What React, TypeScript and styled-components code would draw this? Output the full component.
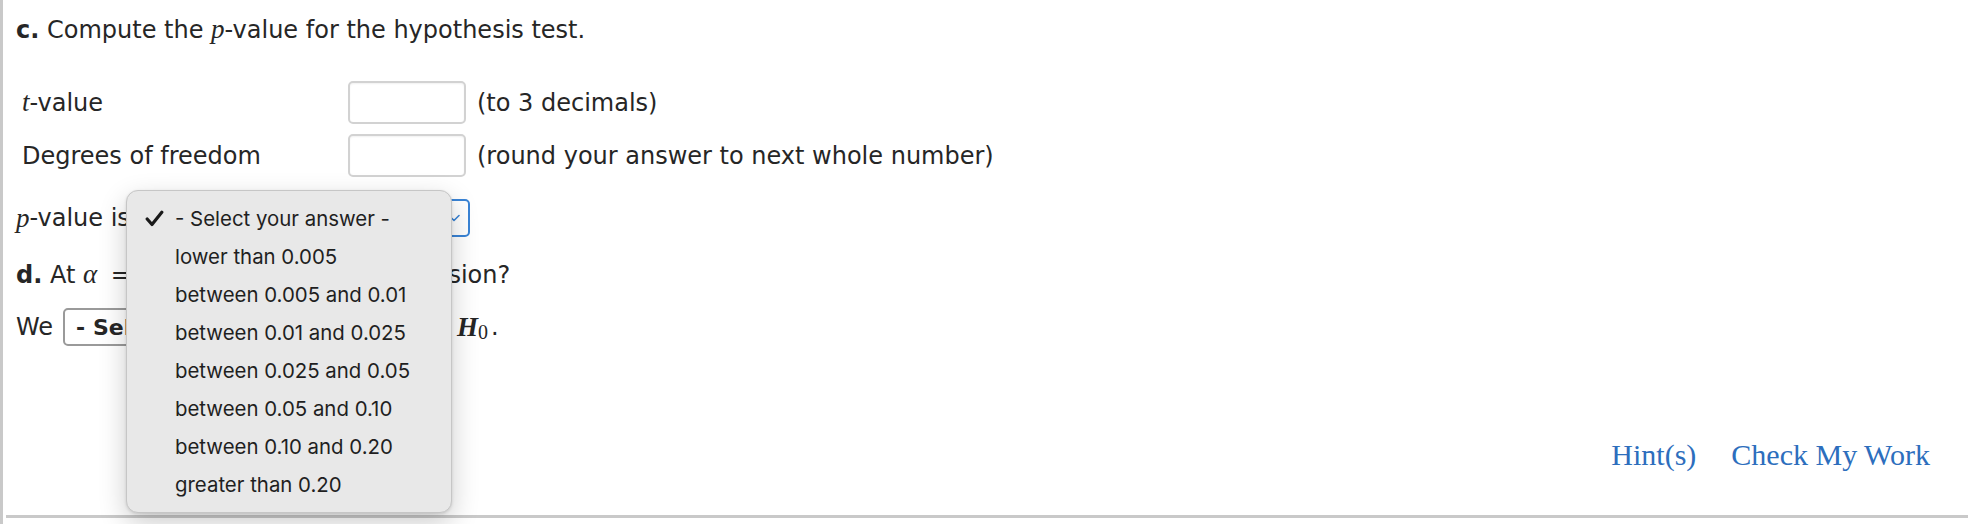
import React from 'react'
import { styled, createGlobalStyle } from 'styled-components'

const GlobalStyle = createGlobalStyle`
  html, body {
    margin: 0;
    padding: 0;
    background: #ffffff;
  }
  body {
    font-family: 'DejaVu Sans', Verdana, sans-serif;
    color: #262626;
  }
`

const options = [
  '- Select your answer -',
  'lower than 0.005',
  'between 0.005 and 0.01',
  'between 0.01 and 0.025',
  'between 0.025 and 0.05',
  'between 0.05 and 0.10',
  'between 0.10 and 0.20',
  'greater than 0.20',
]

const Chevron = () => (
  <svg width="12" height="8" viewBox="0 0 12 8" fill="none">
    <path d="M1 1.5 L6 6.5 L11 1.5" stroke="#3a84d6" strokeWidth="1.6" strokeLinecap="round" strokeLinejoin="round" />
  </svg>
)

const GrayChevron = () => (
  <svg width="12" height="8" viewBox="0 0 12 8" fill="none">
    <path d="M1 1.5 L6 6.5 L11 1.5" stroke="#555" strokeWidth="1.6" strokeLinecap="round" strokeLinejoin="round" />
  </svg>
)

const Check = () => (
  <svg width="19" height="17" viewBox="0 0 19 17" fill="none">
    <path d="M2.2 9 L7 14.5 L16.8 2.2" stroke="#1a1a1a" strokeWidth="3.2" strokeLinecap="round" strokeLinejoin="round" />
  </svg>
)

const App = () => {
  return (
    <>
      <GlobalStyle />
      <Page>
        <Content>
          <Heading>
            <b>c.</b> Compute the <M>p</M>-value for the hypothesis test.
          </Heading>

          <AnswerTable>
            <Label>
              <M>t</M>-value
            </Label>
            <InputBox />
            <Note>(to 3 decimals)</Note>

            <Label>Degrees of freedom</Label>
            <InputBox />
            <Note>(round your answer to next whole number)</Note>
          </AnswerTable>

          <SelectRow $top={22}>
            <M>p</M>-value is
            <Select $focused $width={330}>
              <SelectText>- Select your answer -</SelectText>
              <Chevron />
            </Select>
          </SelectRow>

          <TextRow>
            <b>d.</b> At <M>α</M> <Eq>=</Eq> 0.05, what is your conclusion?
          </TextRow>

          <SelectRow $top={18}>
            We
            <Select $width={382}>
              <SelectText $bold>- Select your answer -</SelectText>
              <GrayChevron />
            </Select>
            <M $bold>H</M>
            <Sub>0</Sub>.
          </SelectRow>

          <Actions>
            <ActionLink>Hint(s)</ActionLink>
            <ActionLink>Check My Work</ActionLink>
          </Actions>
        </Content>

        <Menu>
          {options.map((opt, i) => (
            <MenuItem key={opt}>
              <CheckSlot>{i === 0 && <Check />}</CheckSlot>
              {opt}
            </MenuItem>
          ))}
        </Menu>
      </Page>
    </>
  )
}

const Page = styled.div`
  position: relative;
  height: 524px;
  box-sizing: border-box;
  border-left: 3px solid #c9c9c9;
`

const Content = styled.div`
  margin-left: 3px;
  height: 518px;
  box-sizing: border-box;
  border-bottom: 3px solid #c9c9c9;
  padding: 14px 38px 0 10px;
  display: flex;
  flex-direction: column;
  font-size: 24px;
`

const Heading = styled.div`
  line-height: 30px;
  b {
    font-weight: bold;
  }
`

const M = styled.span<{ $bold?: boolean }>`
  font-family: 'Liberation Serif', 'Times New Roman', serif;
  font-style: italic;
  font-size: 27px;
  font-weight: ${(p) => (p.$bold ? 'bold' : 'normal')};
`

const Eq = styled.span`
  font-size: 24px;
  margin: 0 8px 0 6px;
`

const Sub = styled.span`
  font-family: 'Liberation Serif', 'Times New Roman', serif;
  font-size: 20px;
  position: relative;
  top: 5px;
  margin-right: 3px;
`

const AnswerTable = styled.div`
  margin-top: 36px;
  display: grid;
  grid-template-columns: 332px 118px 1fr;
  grid-auto-rows: 43px;
  row-gap: 10px;
  align-items: center;
`

const Label = styled.div`
  padding-left: 6px;
`

const InputBox = styled.div`
  height: 43px;
  box-sizing: border-box;
  border: 2px solid #d2d2d2;
  border-radius: 5px;
  background: #fff;
  box-shadow: inset 0 1px 2px rgba(0, 0, 0, 0.06);
`

const Note = styled.div`
  padding-left: 11px;
`

const SelectRow = styled.div<{ $top: number }>`
  margin-top: ${(p) => p.$top}px;
  height: 38px;
  display: flex;
  align-items: center;
  white-space: nowrap;
`

const Select = styled.div<{ $focused?: boolean; $width: number }>`
  width: ${(p) => p.$width}px;
  height: 38px;
  box-sizing: border-box;
  margin: 0 12px 0 10px;
  padding: 0 8px 0 11px;
  display: flex;
  align-items: center;
  justify-content: space-between;
  border: 2px solid ${(p) => (p.$focused ? '#3a84d6' : '#9a9a9a')};
  border-radius: 5px;
  background: #fff;
`

const SelectText = styled.span<{ $bold?: boolean }>`
  font-weight: ${(p) => (p.$bold ? 'bold' : 'normal')};
  font-size: 22px;
`

const TextRow = styled.div`
  margin-top: 22px;
  line-height: 30px;
  white-space: nowrap;
`

const Actions = styled.div`
  margin-top: auto;
  margin-bottom: 42px;
  height: 36px;
  display: flex;
  justify-content: flex-end;
  align-items: center;
  gap: 35px;
`

const ActionLink = styled.a`
  font-family: 'Liberation Serif', Georgia, serif;
  font-size: 30px;
  color: #2d6ebd;
  cursor: pointer;
`

const Menu = styled.div`
  position: absolute;
  left: 123px;
  top: 190px;
  width: 326px;
  height: 323px;
  box-sizing: border-box;
  padding-top: 8px;
  background: #e8e8e8;
  border: 1px solid #c6c6c6;
  border-radius: 12px;
  box-shadow: 0 10px 28px rgba(0, 0, 0, 0.2), 0 1px 3px rgba(0, 0, 0, 0.12);
  font-family: Inter, 'Noto Sans', sans-serif;
  font-size: 20.4px;
  color: #1f1f1f;
`

const MenuItem = styled.div`
  height: 38px;
  display: flex;
  align-items: center;
`

const CheckSlot = styled.span`
  width: 48px;
  flex: none;
  display: flex;
  align-items: center;
  padding-left: 18px;
  box-sizing: border-box;
`

export default App
